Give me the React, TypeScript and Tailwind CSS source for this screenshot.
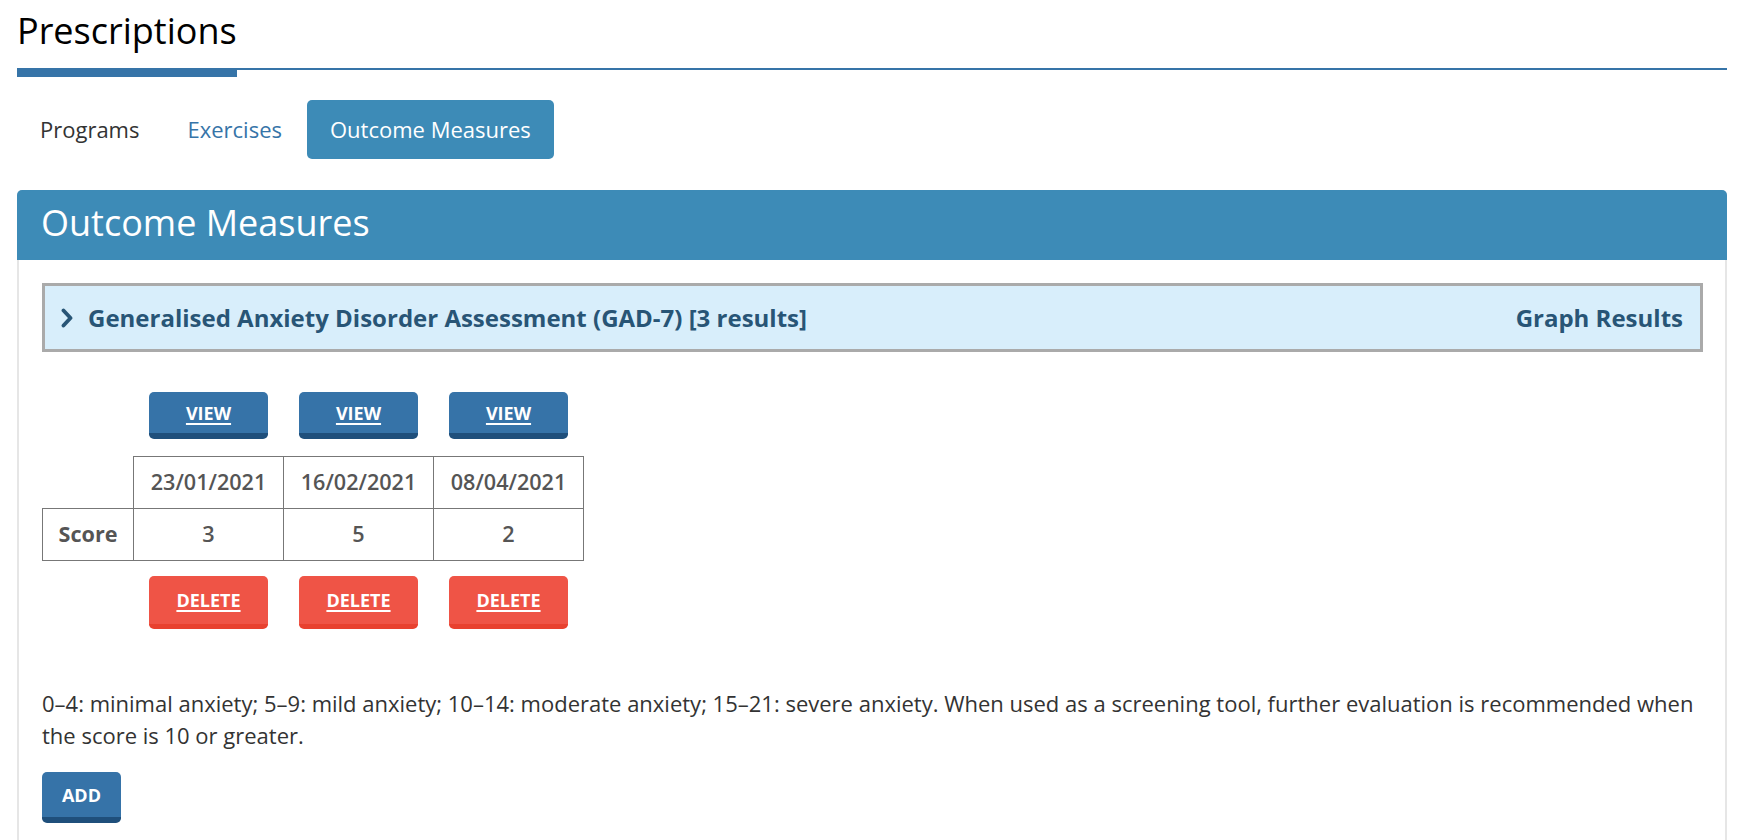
import React from "react";

const results = [
  { date: "23/01/2021", score: 3 },
  { date: "16/02/2021", score: 5 },
  { date: "08/04/2021", score: 2 },
];

function ChevronRight() {
  return (
    <svg viewBox="0 0 12 20" className="w-[12px] h-[20px]" aria-hidden="true">
      <path d="M2.5 2.5 L9.5 10 L2.5 17.5" fill="none" stroke="currentColor" strokeWidth="3.8" strokeLinecap="round" strokeLinejoin="round" />
    </svg>
  );
}

function BlueButton({ children, underline = false, className = "" }: { children: React.ReactNode; underline?: boolean; className?: string }) {
  return (
    <button
      type="button"
      className={`flex items-center justify-center rounded-[5px] bg-[#3673a8] border-b-[6px] border-[#1f4f7b] text-white font-bold text-[18px] leading-none ${underline ? "underline underline-offset-[3px] decoration-[1.5px]" : ""} ${className}`}
    >
      {children}
    </button>
  );
}

export default function App() {
  return (
    <div className="min-h-screen bg-white pl-[17px] pr-[31px] font-['Open_Sans','Liberation_Sans',sans-serif] text-[#333]">
      <h1 className="text-[36px] leading-[62px] text-black font-normal">Prescriptions</h1>
      <div className="mt-[6px] flex items-start">
        <div className="w-[220px] h-[9px] bg-[#3674a8]" />
        <div className="flex-1 h-[2px] bg-[#3674a8]" />
      </div>

      <nav className="mt-[23px] flex gap-[2px] text-[22px]">
        <a className="h-[59px] px-[23px] flex items-center text-[#333]">Programs</a>
        <a className="h-[59px] px-[23px] flex items-center text-[#3674a8]">Exercises</a>
        <a className="h-[59px] px-[23px] flex items-center rounded-[5px] bg-[#3d8bb7] text-white">Outcome Measures</a>
      </nav>

      <section className="mt-[31px] border-2 border-[#e6e6e6] rounded-t-[5px] min-h-[700px]">
        <div className="-mx-[2px] -mt-[2px] h-[70px] rounded-t-[5px] bg-[#3d8bb7] px-[24px] pb-[4px] flex items-center">
          <h2 className="text-[36px] leading-none text-white font-normal">Outcome Measures</h2>
        </div>

        <div className="pl-[23px] pr-[22px] pt-[23px]">
          <div className="h-[69px] border-[3px] border-[#aaaaaa] bg-[#d8eefb] pl-[16px] pr-[17px] flex items-center justify-between text-[24px] font-bold text-[#285576]">
            <div className="flex items-center gap-[15px]">
              <ChevronRight />
              <span>Generalised Anxiety Disorder Assessment (GAD-7) [3 results]</span>
            </div>
            <span>Graph Results</span>
          </div>

          <table className="mt-[40px] border-collapse text-[21.6px] font-semibold text-[#555]">
            <tbody>
              <tr>
                <td className="w-[91px] p-0" />
                {results.map((r) => (
                  <td key={r.date} className="w-[150px] p-0 pb-[17px]">
                    <BlueButton underline className="mx-auto w-[119px] h-[47px]">VIEW</BlueButton>
                  </td>
                ))}
              </tr>
              <tr>
                <td className="p-0" />
                {results.map((r) => (
                  <td key={r.date} className="h-[52px] border border-[#777] text-center p-0">
                    {r.date}
                  </td>
                ))}
              </tr>
              <tr>
                <td className="h-[52px] border border-[#777] text-center font-bold p-0">Score</td>
                {results.map((r) => (
                  <td key={r.date} className="h-[52px] border border-[#777] text-center p-0">
                    {r.score}
                  </td>
                ))}
              </tr>
              <tr>
                <td className="p-0" />
                {results.map((r) => (
                  <td key={r.date} className="p-0 pt-[15px]">
                    <button
                      type="button"
                      className="mx-auto flex items-center justify-center w-[119px] h-[53px] rounded-[5px] bg-[#ef5446] border-b-[5px] border-[#e8412f] text-white font-bold text-[18px] leading-none underline underline-offset-[3px] decoration-[1.5px]"
                    >
                      DELETE
                    </button>
                  </td>
                ))}
              </tr>
            </tbody>
          </table>

          <p className="mt-[58px] text-[22px] leading-[32px] text-[#333]">
            0–4: minimal anxiety; 5–9: mild anxiety; 10–14: moderate anxiety; 15–21: severe anxiety. When used as a screening tool, further evaluation is recommended when the score is 10 or greater.
          </p>

          <BlueButton className="mt-[21px] w-[79px] h-[51px]">ADD</BlueButton>
        </div>
      </section>
    </div>
  );
}
